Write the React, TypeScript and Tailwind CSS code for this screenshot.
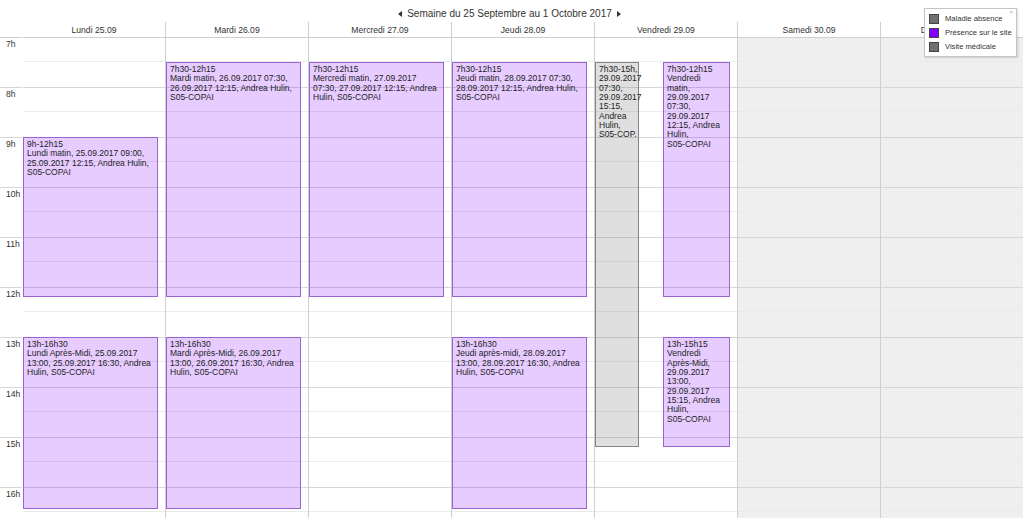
import React from "react";

type Tone = "site" | "absence";

type CalEvent = {
  day: number;
  start: number;
  end: number;
  left?: number;
  width?: number;
  tone: Tone;
  lines: string[];
};

const FIRST_HOUR = 7;
const HOUR_PX = 50;
const hours = [7, 8, 9, 10, 11, 12, 13, 14, 15, 16];

const days = [
  { label: "Lundi 25.09", weekend: false },
  { label: "Mardi 26.09", weekend: false },
  { label: "Mercredi 27.09", weekend: false },
  { label: "Jeudi 28.09", weekend: false },
  { label: "Vendredi 29.09", weekend: false },
  { label: "Samedi 30.09", weekend: true },
  { label: "Dimanche 01.10", weekend: true },
];

const events: CalEvent[] = [
  {
    day: 0, start: 9, end: 12.25, tone: "site",
    lines: ["9h-12h15", "Lundi matin, 25.09.2017 09:00,", "25.09.2017 12:15, Andrea Hulin,", "S05-COPAI"],
  },
  {
    day: 1, start: 7.5, end: 12.25, tone: "site",
    lines: ["7h30-12h15", "Mardi matin, 26.09.2017 07:30,", "26.09.2017 12:15, Andrea Hulin,", "S05-COPAI"],
  },
  {
    day: 2, start: 7.5, end: 12.25, tone: "site",
    lines: ["7h30-12h15", "Mercredi matin, 27.09.2017", "07:30, 27.09.2017 12:15, Andrea", "Hulin, S05-COPAI"],
  },
  {
    day: 3, start: 7.5, end: 12.25, tone: "site",
    lines: ["7h30-12h15", "Jeudi matin, 28.09.2017 07:30,", "28.09.2017 12:15, Andrea Hulin,", "S05-COPAI"],
  },
  {
    day: 4, start: 7.5, end: 15.25, left: 0, width: 44, tone: "absence",
    lines: ["7h30-15h,", "29.09.2017", "07:30,", "29.09.2017", "15:15,", "Andrea", "Hulin,", "S05-COP."],
  },
  {
    day: 4, start: 7.5, end: 12.25, left: 68, width: 67, tone: "site",
    lines: ["7h30-12h15", "Vendredi", "matin,", "29.09.2017", "07:30,", "29.09.2017", "12:15, Andrea", "Hulin,", "S05-COPAI"],
  },
  {
    day: 0, start: 13, end: 16.5, tone: "site",
    lines: ["13h-16h30", "Lundi Après-Midi, 25.09.2017", "13:00, 25.09.2017 16:30, Andrea", "Hulin, S05-COPAI"],
  },
  {
    day: 1, start: 13, end: 16.5, tone: "site",
    lines: ["13h-16h30", "Mardi Après-Midi, 26.09.2017", "13:00, 26.09.2017 16:30, Andrea", "Hulin, S05-COPAI"],
  },
  {
    day: 3, start: 13, end: 16.5, tone: "site",
    lines: ["13h-16h30", "Jeudi après-midi, 28.09.2017", "13:00, 28.09.2017 16:30, Andrea", "Hulin, S05-COPAI"],
  },
  {
    day: 4, start: 13, end: 15.25, left: 68, width: 67, tone: "site",
    lines: ["13h-15h15", "Vendredi", "Après-Midi,", "29.09.2017", "13:00,", "29.09.2017", "15:15, Andrea", "Hulin,", "S05-COPAI"],
  },
];

const legend = [
  { label: "Maladie absence", swatch: "bg-[#707070]" },
  { label: "Présence sur le site", swatch: "bg-[#8000ff]" },
  { label: "Visite médicale", swatch: "bg-[#707070]" },
];

function Arrow({ dir }: { dir: "left" | "right" }) {
  return (
    <svg width="4" height="6" viewBox="0 0 4 6" className="shrink-0">
      {dir === "left" ? (
        <polygon points="4,0 0,3 4,6" fill="#333" />
      ) : (
        <polygon points="0,0 4,3 0,6" fill="#333" />
      )}
    </svg>
  );
}

function Slot({ first }: { first: boolean }) {
  return (
    <div className={`h-[50px] border-t ${first ? "border-[#cfcfcf]" : "border-[#d6d6d6]"}`}>
      <div className="h-[24px] border-b border-[#ebebeb]" />
    </div>
  );
}

function EventBox({ ev }: { ev: CalEvent }) {
  const top = (ev.start - FIRST_HOUR) * HOUR_PX;
  const height = (ev.end - ev.start) * HOUR_PX - 3;
  const pos: React.CSSProperties =
    ev.width !== undefined
      ? { top, height, left: ev.left ?? 0, width: ev.width }
      : { top, height, left: 0, right: 7 };
  const tone =
    ev.tone === "site"
      ? "bg-[#8000ff]/20 border-[#9865cf]"
      : "bg-[#808080]/25 border-[#858585]";
  return (
    <div
      className={`absolute border px-[3px] pt-[2px] text-[8.5px] leading-[9.33px] text-[#1e1e1e] whitespace-nowrap ${tone}`}
      style={pos}
    >
      {ev.lines.map((l, i) => (
        <div key={i}>{l}</div>
      ))}
    </div>
  );
}

export default function App() {
  return (
    <div className="relative h-[518px] w-[1024px] overflow-hidden bg-white text-[#333] font-['Liberation_Sans',Arial,sans-serif]">
      {/* week navigation */}
      <div className="flex h-[22px] items-start justify-center gap-[5px] pt-[8px] pr-[5px] text-[10px] leading-[12px]">
        <span className="flex h-[12px] items-center">
          <Arrow dir="left" />
        </span>
        <span>Semaine du 25 Septembre au 1 Octobre 2017</span>
        <span className="flex h-[12px] items-center">
          <Arrow dir="right" />
        </span>
      </div>

      {/* day headers */}
      <div className="flex h-[15px]">
        <div className="w-[22px] shrink-0" />
        {days.map((d, i) => (
          <div
            key={d.label}
            className={`flex w-[143px] shrink-0 items-center justify-center overflow-hidden border-l text-[8.6px] leading-[10px] ${
              i === 0 ? "border-transparent" : "border-[#cfcfcf]"
            }`}
          >
            {d.label}
          </div>
        ))}
      </div>

      {/* time grid */}
      <div className="flex">
        <div className="w-[22px] shrink-0">
          {hours.map((h, i) => (
            <div
              key={h}
              className={`h-[50px] border-t pl-[6px] pt-[1px] text-[8.6px] leading-[10px] ${
                i === 0 ? "border-[#cfcfcf]" : "border-[#d6d6d6]"
              }`}
            >
              {h}h
            </div>
          ))}
        </div>
        {days.map((d, di) => (
          <div
            key={d.label}
            className={`relative w-[143px] shrink-0 border-l ${
              di === 0 ? "border-transparent" : "border-[#cfcfcf]"
            } ${d.weekend ? "bg-[#efefef]" : "bg-white"}`}
          >
            {hours.map((h, i) => (
              <Slot key={h} first={i === 0} />
            ))}
            {events
              .filter((e) => e.day === di)
              .map((e, i) => (
                <EventBox key={i} ev={e} />
              ))}
          </div>
        ))}
      </div>

      {/* legend */}
      <div className="absolute left-[924px] top-[8px] h-[49px] w-[93px] border border-[#c4c4c4] bg-white pl-[4px] pt-[5px] shadow-[1px_1px_2px_rgba(0,0,0,0.15)]">
        <span className="absolute right-[3px] top-[0px] text-[6px] leading-[7px] text-[#aaa]">×</span>
        <div className="flex flex-col gap-[4px]">
          {legend.map((l) => (
            <div key={l.label} className="flex h-[10px] items-center gap-[6px]">
              <span className={`h-[10px] w-[10px] shrink-0 border border-[#444] ${l.swatch}`} />
              <span className="text-[7.6px] leading-[10px] text-[#333] whitespace-nowrap">{l.label}</span>
            </div>
          ))}
        </div>
      </div>
    </div>
  );
}
